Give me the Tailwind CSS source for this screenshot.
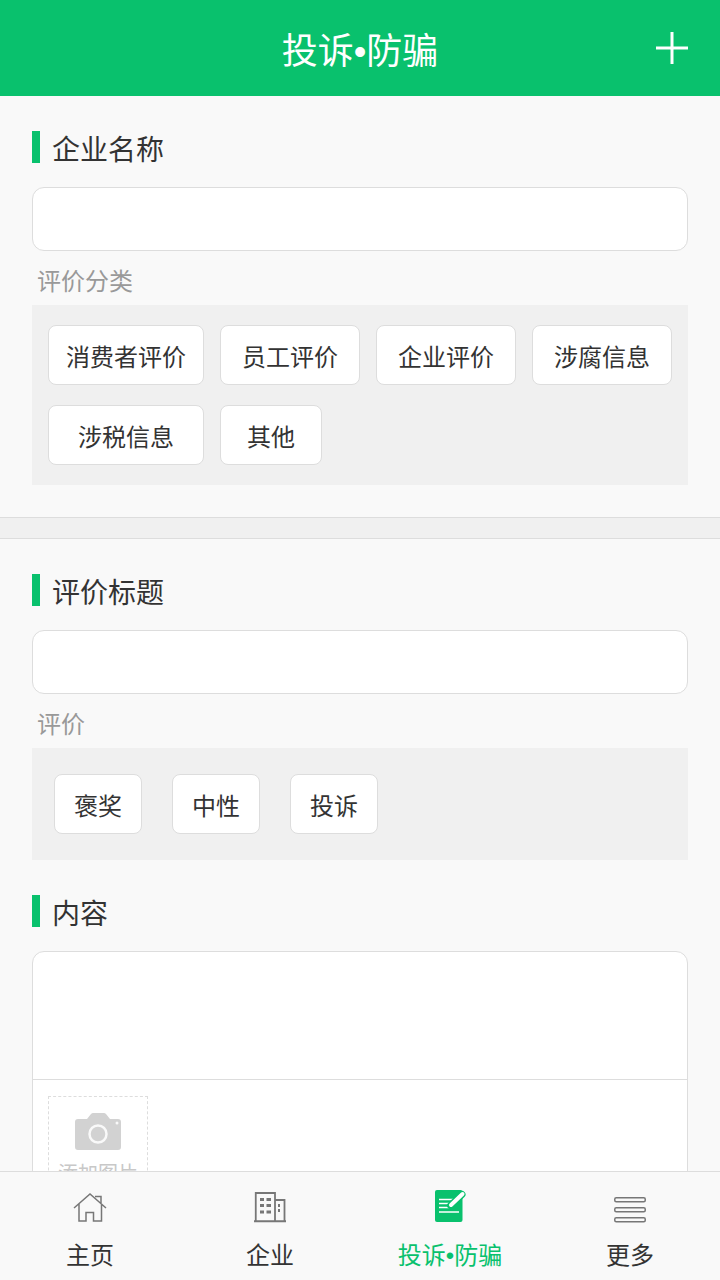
<!DOCTYPE html>
<html lang="zh-CN">
<head>
    <meta charset="UTF-8">
    <meta name="viewport" content="width=device-width, initial-scale=1.0">
    <title>投诉·防骗</title>
    <script src="https://cdn.jsdelivr.net/npm/@tailwindcss/browser@4"></script>
</head>
<body class="bg-[#f9f9f9] font-['Liberation_Sans','Noto_Sans_CJK_SC',sans-serif] text-[#333333]">
<div class="flex flex-col h-[1280px] w-[720px] overflow-hidden">

    <!-- Header -->
    <header class="relative shrink-0 h-[96px] bg-[#09c16d] flex items-center justify-center text-white text-[36px]">
        <h1 class="pt-[8px] leading-none">投诉•防骗</h1>
        <svg class="absolute left-[655px] top-[31px]" width="34" height="34" viewBox="0 0 34 34">
            <path d="M17 1V33M1 17H33" stroke="#fff" stroke-width="3" fill="none"/>
        </svg>
    </header>

    <!-- Form -->
    <main class="flex-1 overflow-hidden">
        <section class="px-[32px] pt-[35px] pb-[32px]">
            <div class="flex items-center h-[32px]">
                <span class="w-[8px] h-[32px] bg-[#09c16d]"></span>
                <h2 class="ml-[12px] pt-[8px] text-[28px] leading-none">企业名称</h2>
            </div>
            <div class="mt-[24px] h-[64px] bg-white border border-[#dddddd] rounded-[12px]"></div>
            <p class="mt-[14px] ml-[5px] h-[40px] text-[24px] leading-[34px] text-[#999999]">评价分类</p>
            <div class="h-[180px] bg-[#f0f0f0] px-[16px] pt-[20px] flex flex-wrap content-start gap-x-[16px] gap-y-[20px]">
                <button class="w-[156px] h-[60px] pt-[5px] bg-white border border-[#dddddd] rounded-[8px] text-[24px]">消费者评价</button>
                <button class="w-[140px] h-[60px] pt-[5px] bg-white border border-[#dddddd] rounded-[8px] text-[24px]">员工评价</button>
                <button class="w-[140px] h-[60px] pt-[5px] bg-white border border-[#dddddd] rounded-[8px] text-[24px]">企业评价</button>
                <button class="w-[140px] h-[60px] pt-[5px] bg-white border border-[#dddddd] rounded-[8px] text-[24px]">涉腐信息</button>
                <button class="w-[156px] h-[60px] pt-[5px] bg-white border border-[#dddddd] rounded-[8px] text-[24px]">涉税信息</button>
                <button class="w-[102px] h-[60px] pt-[5px] bg-white border border-[#dddddd] rounded-[8px] text-[24px]">其他</button>
            </div>
        </section>

        <div class="h-[22px] bg-[#f0f0f0] border-y border-[#dddddd]"></div>

        <section class="px-[32px] pt-[35px]">
            <div class="flex items-center h-[32px]">
                <span class="w-[8px] h-[32px] bg-[#09c16d]"></span>
                <h2 class="ml-[12px] pt-[8px] text-[28px] leading-none">评价标题</h2>
            </div>
            <div class="mt-[24px] h-[64px] bg-white border border-[#dddddd] rounded-[12px]"></div>
            <p class="mt-[14px] ml-[5px] h-[40px] text-[24px] leading-[34px] text-[#999999]">评价</p>
            <div class="h-[112px] bg-[#f0f0f0] px-[22px] pt-[26px] flex gap-x-[30px]">
                <button class="w-[88px] h-[60px] pt-[5px] bg-white border border-[#dddddd] rounded-[8px] text-[24px]">褒奖</button>
                <button class="w-[88px] h-[60px] pt-[5px] bg-white border border-[#dddddd] rounded-[8px] text-[24px]">中性</button>
                <button class="w-[88px] h-[60px] pt-[5px] bg-white border border-[#dddddd] rounded-[8px] text-[24px]">投诉</button>
            </div>

            <div class="mt-[35px] flex items-center h-[32px]">
                <span class="w-[8px] h-[32px] bg-[#09c16d]"></span>
                <h2 class="ml-[12px] pt-[8px] text-[28px] leading-none">内容</h2>
            </div>
            <div class="mt-[24px] h-[300px] bg-white border border-[#dddddd] rounded-t-[12px]">
                <div class="h-[128px] border-b border-[#dddddd]"></div>
                <div class="ml-[15px] mt-[16px] w-[100px] h-[100px] border border-dashed border-[#dddddd] flex flex-col items-center">
                    <svg class="mt-[16px]" width="48" height="38" viewBox="0 0 48 38">
                        <path fill="#d2d2d2" d="M4 6H13L17 1Q18 0 19 0H30Q31 0 32 1L36 6H44Q47 6 47 9V34Q47 37 44 37H4Q1 37 1 34V9Q1 6 4 6Z"/>
                        <circle cx="24" cy="21" r="8.500" fill="none" stroke="#f9f9f9" stroke-width="2.500"/>
                        <circle cx="43" cy="10" r="1.500" fill="#f9f9f9"/>
                    </svg>
                    <span class="mt-[9px] text-[20px] leading-[28px] text-[#c8c8c8] whitespace-nowrap">添加图片</span>
                </div>
            </div>
        </section>
    </main>

    <!-- Tab bar -->
    <nav class="shrink-0 h-[109px] bg-[#f9f9f9] border-t border-[#dddddd] grid grid-cols-4 text-[24px]">
        <a class="flex flex-col items-center">
            <svg class="mt-[20px]" width="36" height="32" viewBox="0 0 36 32" fill="none" stroke="#777777" stroke-width="1.500">
                <path d="M2 16L18 2L34 16M7 11.500V29H14V20.500H21.500V29H29.500V11.500M23 4.500H29V11"/>
            </svg>
            <span class="mt-[14px] leading-[36px]">主页</span>
        </a>
        <a class="flex flex-col items-center">
            <svg class="mt-[20px]" width="32" height="32" viewBox="0 0 32 32" fill="none">
                <path d="M1.750 29V1H21V29M21 8H30.500V29M0 29.250H32" stroke="#777777" stroke-width="1.800"/>
                <path fill="#777777" d="M6 6H10V9H6ZM12.500 6H17V9H12.500ZM6 12H10V15H6ZM12.500 12H17V15H12.500ZM6 18.500H10V21.500H6ZM12.500 18.500H17V21.500H12.500ZM24 12H26V15H24ZM24 17H26V20H24Z"/>
            </svg>
            <span class="mt-[14px] leading-[36px]">企业</span>
        </a>
        <a class="flex flex-col items-center text-[#09c16d]">
            <svg class="mt-[18px]" width="34" height="34" viewBox="0 0 34 34" fill="none">
                <rect x="2" y="0" width="27.500" height="32" rx="2" fill="#09c16d"/>
                <path d="M6 9.500H24M6 13.500H20M6 17.500H17M6 22H26" stroke="#fff" stroke-width="1.500"/>
                <path d="M17.500 15.500L29 4.500" stroke="#09c16d" stroke-width="7" stroke-linecap="round"/>
                <path d="M18 15L29.500 4" stroke="#fff" stroke-width="4" stroke-linecap="round"/>
            </svg>
            <span class="mt-[14px] leading-[36px]">投诉•防骗</span>
        </a>
        <a class="flex flex-col items-center">
            <svg class="mt-[25px]" width="32" height="26" viewBox="0 0 32 26" fill="none" stroke="#777777" stroke-width="1.500">
                <rect x="0.750" y="0.750" width="30.500" height="4" rx="1.500"/>
                <rect x="0.750" y="10.750" width="30.500" height="4" rx="1.500"/>
                <rect x="0.750" y="20.750" width="30.500" height="4" rx="1.500"/>
            </svg>
            <span class="mt-[15px] leading-[36px]">更多</span>
        </a>
    </nav>
</div>
</body>
</html>
